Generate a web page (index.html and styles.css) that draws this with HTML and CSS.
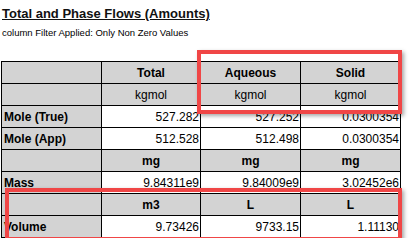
FILE: index.html
```html
<!DOCTYPE html>
<html>
<head>
<meta charset="utf-8">
<link rel="stylesheet" href="styles.css">
</head>
<body>
<div class="page">
  <h1 class="title">Total and Phase Flows (Amounts)</h1>
  <p class="note">column Filter Applied: Only Non Zero Values</p>
  <div class="sheet">
    <div class="grid">
      <div class="c g"></div><div class="c g h">Total</div><div class="c g h">Aqueous</div><div class="c g h">Solid</div>
      <div class="c g"></div><div class="c g u">kgmol</div><div class="c g u">kgmol</div><div class="c g u">kgmol</div>
      <div class="c g l">Mole (True)</div><div class="c v">527.282</div><div class="c v">527.252</div><div class="c v">0.0300354</div>
      <div class="c g l">Mole (App)</div><div class="c v">512.528</div><div class="c v">512.498</div><div class="c v">0.0300354</div>
      <div class="c g"></div><div class="c g h">mg</div><div class="c g h">mg</div><div class="c g h">mg</div>
      <div class="c g l">Mass</div><div class="c v">9.84311e9</div><div class="c v">9.84009e9</div><div class="c v">3.02452e6</div>
      <div class="c g"></div><div class="c g h">m3</div><div class="c g h">L</div><div class="c g h">L</div>
      <div class="c g l">Volume</div><div class="c v">9.73426</div><div class="c v">9733.15</div><div class="c v">1.11130</div>
    </div>
    <div class="mark mark-top"></div>
    <div class="mark mark-bottom"></div>
  </div>
</div>
</body>
</html>
```

FILE: styles.css
```css
html, body {
  margin: 0;
  padding: 0;
  background: #ffffff;
}
.page {
  display: flex;
  flex-direction: column;
  align-items: flex-start;
  padding-left: 1px;
  font-family: "Liberation Sans", Arial, sans-serif;
  color: #000;
}
.title {
  margin: 6px 0 0 1px;
  font-size: 13px;
  line-height: 15px;
  font-weight: bold;
  text-decoration: underline;
  color: #111;
}
.note {
  margin: 6px 0 0 1px;
  font-size: 9.5px;
  line-height: 11px;
}
.sheet {
  position: relative;
  margin-top: 23px;
}
.grid {
  display: grid;
  grid-template-columns: 99px 98px 99px 99px;
  grid-auto-rows: 21px;
  gap: 1px;
  background: #000;
  border: 1px solid #000;
}
.c {
  box-sizing: border-box;
  padding: 2px 2px 0 2px;
  font-size: 12px;
  line-height: 19px;
  white-space: nowrap;
  overflow: hidden;
  background: #fff;
}
.g { background: #d3d3d3; }
.h { font-weight: bold; text-align: center; }
.u { text-align: center; }
.l { font-weight: bold; }
.v { text-align: right; padding-right: 1px; }
.mark {
  position: absolute;
  border: 4px solid #f04646;
  box-shadow: 2px 2px 4px rgba(0, 0, 0, 0.35);
}
.mark-top {
  left: 196px;
  top: -11px;
  width: 197px;
  height: 56px;
}
.mark-bottom {
  left: 4px;
  top: 127px;
  width: 389px;
  height: 45px;
}
```
